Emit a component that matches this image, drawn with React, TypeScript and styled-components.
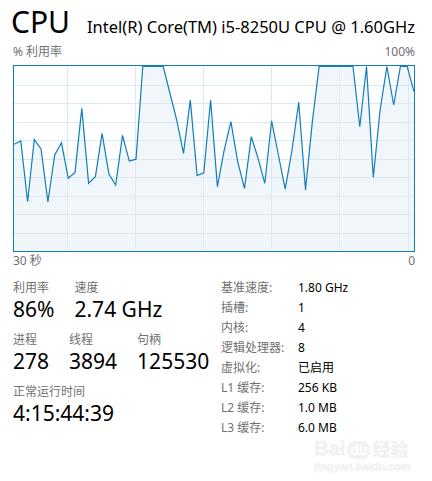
import { Fragment } from "react";
import styled, { createGlobalStyle } from "styled-components";

const GlobalStyle = createGlobalStyle`
  body {
    margin: 0;
    background: #ffffff;
  }
`;

// CPU usage over the last 60 seconds, oldest first (percent)
const usage = [
  57.7, 59.5, 26.6, 60.4, 55.1, 26.6, 51.9, 58.5, 39.3, 42.5, 77.1, 36.6, 40.2,
  63.6, 41.6, 35.7, 62.5, 48.6, 49.6, 100, 100, 100, 100, 85.4, 70.8, 52.8,
  81.6, 40.9, 42.2, 81.6, 34.8, 54.6, 69.9, 48.3, 33.9, 61.8, 50.1, 36.6, 70.4,
  51.9, 33.4, 54.6, 80.4, 33, 69.7, 100, 100, 100, 100, 100, 100, 67.2, 100,
  39.8, 76.2, 100, 78.9, 100, 100, 86.1,
];

const details = [
  ["基准速度:", "1.80 GHz"],
  ["插槽:", "1"],
  ["内核:", "4"],
  ["逻辑处理器:", "8"],
  ["虚拟化:", "已启用"],
  ["L1 缓存:", "256 KB"],
  ["L2 缓存:", "1.0 MB"],
  ["L3 缓存:", "6.0 MB"],
];

const CHART_W = 400;
const CHART_H = 185;
const gridRows = [1, 2, 3, 4, 5, 6, 7, 8, 9].map((k) => k * 18.5);
const gridCols = [53, 121, 189, 257, 325, 394];

const Page = styled.div`
  position: relative;
  width: 432px;
  height: 481px;
  box-sizing: border-box;
  padding: 2px 17px 0 13px;
  font-family: "Noto Sans", "Noto Sans CJK SC", sans-serif;
  color: #000;
  overflow: hidden;
`;

const Header = styled.div`
  display: flex;
  align-items: baseline;
  justify-content: space-between;
  height: 40px;
`;

const Title = styled.h1`
  margin: 0 0 0 -2px;
  font-size: 30px;
  font-weight: 400;
  line-height: 40px;
`;

const Model = styled.div`
  font-size: 16.5px;
  line-height: 40px;
`;

const AxisRow = styled.div<{ $gap: number }>`
  display: flex;
  justify-content: space-between;
  margin-top: ${(p) => p.$gap}px;
  font-size: 12px;
  line-height: 16px;
  color: #707070;
`;

const Chart = styled.div`
  box-sizing: border-box;
  height: 187px;
  margin-top: 5px;
  border: 1px solid #117dbb;

  svg {
    display: block;
  }
`;

const Bottom = styled.div`
  display: flex;
  margin-top: 11px;
`;

const StatsColumn = styled.div`
  width: 208px;
  flex-shrink: 0;
`;

const StatRow = styled.div`
  display: flex;
  gap: 20px;
  margin-bottom: 10px;
`;

const Stat = styled.div`
  display: flex;
  flex-direction: column;
`;

const Label = styled.span`
  font-size: 12px;
  line-height: 16px;
  color: #707070;
`;

const Value = styled.span`
  font-size: 21px;
  line-height: 26px;
  white-space: nowrap;
`;

const DetailsGrid = styled.div`
  display: grid;
  grid-template-columns: 77px auto;
  grid-auto-rows: 20px;
  align-items: center;
  margin-top: -2px;
  font-size: 12px;
  line-height: 20px;
`;

const DetailLabel = styled.span`
  color: #707070;
`;

const DetailValue = styled.span`
  color: #000;
`;

const Watermark = styled.div`
  position: absolute;
  left: 314px;
  top: 437px;
  color: #f1f1f1;
  font-family: "Liberation Sans", sans-serif;
  text-shadow: 1px 1px 0 #f8f8f8;
  pointer-events: none;
`;

const MarkLine = styled.div`
  display: flex;
  align-items: flex-end;
  gap: 2px;
  font-size: 20px;
  font-weight: 700;
  line-height: 22px;
`;

const MarkDu = styled.span`
  padding: 0 3px;
  border-radius: 8px;
  background: #f2f2f2;
  color: #ffffff;
  text-shadow: none;
  font-size: 14px;
  line-height: 18px;
`;

const MarkCn = styled.span`
  font-family: "Noto Sans CJK SC", sans-serif;
  font-size: 18px;
  font-weight: 700;
`;

const MarkUrl = styled.div`
  margin-top: 1px;
  font-size: 11px;
  font-weight: 700;
  line-height: 12px;
`;

function UsageChart({ data }: { data: number[] }) {
  const pts = data.map((v, i) => {
    const x = (i * CHART_W) / (data.length - 1);
    const y = Math.max(0.5, CHART_H - (v / 100) * CHART_H);
    return `${x.toFixed(1)},${y.toFixed(1)}`;
  });
  const area = [...pts, `${CHART_W},${CHART_H}`, `0,${CHART_H}`].join(" ");

  return (
    <svg width={CHART_W} height={CHART_H} viewBox={`0 0 ${CHART_W} ${CHART_H}`}>
      <polygon points={area} fill="#f1f6fa" />
      {gridRows.map((y) => (
        <line
          key={`r${y}`}
          x1={0}
          x2={CHART_W}
          y1={Math.round(y) + 0.5}
          y2={Math.round(y) + 0.5}
          stroke="#d9eaf4"
        />
      ))}
      {gridCols.map((x) => (
        <line
          key={`c${x}`}
          x1={x + 0.5}
          x2={x + 0.5}
          y1={0}
          y2={CHART_H}
          stroke="#d9eaf4"
        />
      ))}
      <polyline
        points={pts.join(" ")}
        fill="none"
        stroke="#117dbb"
        strokeWidth={1.2}
      />
    </svg>
  );
}

export default function App() {
  return (
    <Page>
      <GlobalStyle />
      <Header>
        <Title>CPU</Title>
        <Model>Intel(R) Core(TM) i5-8250U CPU @ 1.60GHz</Model>
      </Header>

      <AxisRow $gap={2}>
        <span>% 利用率</span>
        <span>100%</span>
      </AxisRow>
      <Chart>
        <UsageChart data={usage} />
      </Chart>
      <AxisRow $gap={1}>
        <span>30 秒</span>
        <span>0</span>
      </AxisRow>

      <Bottom>
        <StatsColumn>
          <StatRow>
            <Stat>
              <Label>利用率</Label>
              <Value>86%</Value>
            </Stat>
            <Stat>
              <Label>速度</Label>
              <Value>2.74 GHz</Value>
            </Stat>
          </StatRow>
          <StatRow>
            <Stat>
              <Label>进程</Label>
              <Value>278</Value>
            </Stat>
            <Stat>
              <Label>线程</Label>
              <Value>3894</Value>
            </Stat>
            <Stat>
              <Label>句柄</Label>
              <Value>125530</Value>
            </Stat>
          </StatRow>
          <StatRow>
            <Stat>
              <Label>正常运行时间</Label>
              <Value>4:15:44:39</Value>
            </Stat>
          </StatRow>
        </StatsColumn>

        <DetailsGrid>
          {details.map(([k, v]) => (
            <Fragment key={k}>
              <DetailLabel>{k}</DetailLabel>
              <DetailValue>{v}</DetailValue>
            </Fragment>
          ))}
        </DetailsGrid>
      </Bottom>

      <Watermark>
        <MarkLine>
          <span>Bai</span>
          <MarkDu>du</MarkDu>
          <MarkCn>经验</MarkCn>
        </MarkLine>
        <MarkUrl>jingyan.baidu.com</MarkUrl>
      </Watermark>
    </Page>
  );
}
